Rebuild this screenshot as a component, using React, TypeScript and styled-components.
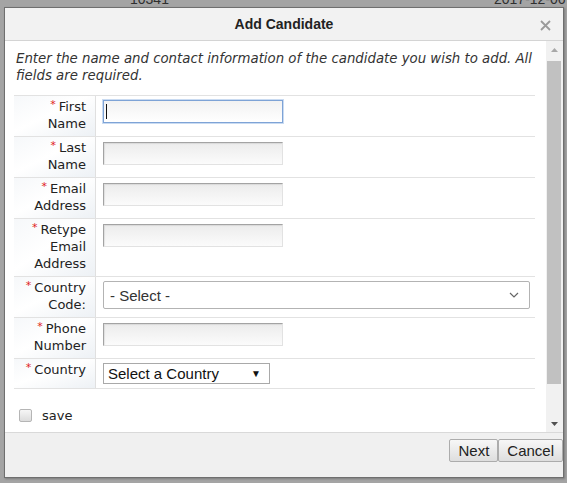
import styled, { createGlobalStyle } from "styled-components";

const GlobalStyle = createGlobalStyle`
  * { box-sizing: border-box; }
  html, body {
    margin: 0;
    padding: 0;
    background: #a4a4a4;
  }
`;

const LABEL_FONT = `"DejaVu Sans", "Liberation Sans", sans-serif`;
const CONTROL_FONT = `"Liberation Sans", Arial, sans-serif`;

const Page = styled.div`
  width: 567px;
  height: 483px;
  overflow: hidden;
  background: #a4a4a4;
`;

const BackStrip = styled.div`
  height: 7px;
  overflow: hidden;
  display: flex;
  font-family: ${CONTROL_FONT};
  font-size: 14px;
  line-height: 16px;
  color: #2f2f2f;
  white-space: nowrap;

  span {
    margin-top: -9px;
  }
`;

const BackId = styled.span`
  margin-left: 130px;
  width: 364px;
`;

const Dialog = styled.div`
  margin-left: 4px;
  width: 560px;
  height: 471px;
  border: 1px solid #6f6f6f;
  background: #fff;
  display: flex;
  flex-direction: column;
  box-shadow: 1px 1px 2px rgba(0, 0, 0, 0.25);
`;

const TitleBar = styled.div`
  height: 33px;
  flex-shrink: 0;
  background: #f2f2f2;
  border-bottom: 1px solid #d4d4d4;
  display: grid;
  grid-template-columns: 1fr auto 1fr;
  align-items: center;
`;

const Title = styled.div`
  grid-column: 2;
  font-family: ${CONTROL_FONT};
  font-size: 14px;
  font-weight: 700;
  color: #222;
`;

const CloseBtn = styled.div`
  grid-column: 3;
  justify-self: end;
  margin-right: 12px;
  margin-top: 2px;
  display: flex;
`;

const Body = styled.div`
  flex: 1;
  display: flex;
  min-height: 0;
`;

const Content = styled.div`
  flex: 1;
  padding: 9px 11px 0 9px;
  overflow: hidden;
`;

const Intro = styled.p`
  margin: 0 0 11px 0;
  padding-left: 2px;
  font-family: ${LABEL_FONT};
  font-style: italic;
  font-size: 13.3px;
  line-height: 17px;
  color: #333;
`;

const Table = styled.div`
  border-top: 1px solid #e2e2e2;
`;

const Row = styled.div`
  display: grid;
  grid-template-columns: 82px 1fr;
  border-bottom: 1px solid #e2e2e2;
`;

const LabelCell = styled.div`
  border-right: 1px solid #e0e0e0;
  background: linear-gradient(to bottom right, #f6f8fa 0%, #ffffff 45%, #edf1f5 100%);
  padding: 2px 9px 4px 4px;
  text-align: right;
  font-family: ${LABEL_FONT};
  font-size: 13px;
  line-height: 17px;
  color: #222;
`;

const Star = styled.span`
  color: #e02020;
  font-size: 11px;
  line-height: 0;
  vertical-align: 3px;
  margin-right: 3px;
`;

const FieldCell = styled.div`
  padding: 4px 0 4px 7px;
`;

const TextField = styled.div<{ $focused?: boolean }>`
  position: relative;
  width: 180px;
  height: 23px;
  border: 1px solid;
  border-color: ${({ $focused }) =>
    $focused ? "#7ea3d6" : "#a3a3a3 #e2e2e2 #e2e2e2 #a3a3a3"};
  box-shadow: ${({ $focused }) =>
    $focused ? "0 0 0 1px #c9dbf2" : "inset 1px 1px 1px rgba(0,0,0,0.08)"};
  background: ${({ $focused }) =>
    $focused ? "linear-gradient(#f2f2f2, #ffffff)" : "linear-gradient(#ececec, #fbfbfb)"};
  margin-top: ${({ $focused }) => ($focused ? "0" : "1px")};
`;

const Caret = styled.span`
  position: absolute;
  left: 2px;
  top: 3px;
  width: 1px;
  height: 15px;
  background: #111;
`;

const CodeSelect = styled.div`
  width: 427px;
  height: 28px;
  border: 1px solid #b3b3b3;
  border-radius: 2px;
  background: #fff;
  display: flex;
  align-items: center;
  justify-content: space-between;
  padding: 0 10px 0 6px;
  font-family: ${CONTROL_FONT};
  font-size: 15px;
  color: #333;
`;

const CountrySelect = styled.div`
  width: 167px;
  height: 21px;
  border: 1px solid #a9a9a9;
  background: #fff;
  display: flex;
  align-items: center;
  justify-content: space-between;
  padding: 0 8px 0 4px;
  font-family: ${CONTROL_FONT};
  font-size: 15px;
  color: #111;
`;

const DownGlyph = styled.span`
  font-size: 10px;
  color: #111;
`;

const SaveRow = styled.label`
  display: flex;
  align-items: center;
  gap: 10px;
  margin-top: 19px;
  padding-left: 5px;
  font-family: ${LABEL_FONT};
  font-size: 13px;
  color: #222;
`;

const CheckBox = styled.span`
  width: 13px;
  height: 13px;
  border: 1px solid #b5b5b5;
  border-radius: 2px;
  background: linear-gradient(#f6f6f6, #dcdcdc);
`;

const ScrollBar = styled.div`
  width: 17px;
  flex-shrink: 0;
  background: #f1f1f1;
  display: flex;
  flex-direction: column;
`;

const ArrowBox = styled.div`
  height: 17px;
  display: flex;
  align-items: center;
  justify-content: center;
`;

const Track = styled.div`
  flex: 1;
  padding: 3px 2px 0 1px;
`;

const Thumb = styled.div`
  height: 323px;
  background: #c1c1c1;
`;

const Footer = styled.div`
  height: 45px;
  flex-shrink: 0;
  background: #f0f0f0;
  border-top: 1px solid #d9d9d9;
  display: flex;
  justify-content: flex-end;
  align-items: flex-start;
  padding: 6px 0 0 0;
`;

const Button = styled.button`
  height: 23px;
  padding: 0 8px;
  border: 1px solid #acacac;
  border-radius: 2px;
  background: linear-gradient(#f7f7f7, #dedede);
  font-family: ${CONTROL_FONT};
  font-size: 15px;
  color: #222;
  cursor: pointer;
`;

interface Field {
  label: string[];
  kind: "text" | "focused" | "code" | "country";
}

const FIELDS: Field[] = [
  { label: ["First", "Name"], kind: "focused" },
  { label: ["Last", "Name"], kind: "text" },
  { label: ["Email", "Address"], kind: "text" },
  { label: ["Retype", "Email", "Address"], kind: "text" },
  { label: ["Country", "Code:"], kind: "code" },
  { label: ["Phone", "Number"], kind: "text" },
  { label: ["Country"], kind: "country" },
];

function renderControl(kind: Field["kind"]) {
  if (kind === "focused")
    return (
      <TextField $focused>
        <Caret />
      </TextField>
    );
  if (kind === "code")
    return (
      <CodeSelect>
        - Select -
        <svg width="10" height="6" viewBox="0 0 10 6">
          <polyline points="1,1 5,5 9,1" fill="none" stroke="#666" strokeWidth="1.2" />
        </svg>
      </CodeSelect>
    );
  if (kind === "country")
    return (
      <CountrySelect>
        Select a Country
        <DownGlyph>▼</DownGlyph>
      </CountrySelect>
    );
  return <TextField />;
}

export default function App() {
  return (
    <Page>
      <GlobalStyle />
      <BackStrip>
        <BackId>10341</BackId>
        <span>2017-12-06</span>
      </BackStrip>

      <Dialog>
        <TitleBar>
          <Title>Add Candidate</Title>
          <CloseBtn>
            <svg width="11" height="11" viewBox="0 0 11 11">
              <path d="M1 1 L10 10 M10 1 L1 10" stroke="#9a9a9a" strokeWidth="1.8" />
            </svg>
          </CloseBtn>
        </TitleBar>

        <Body>
          <Content>
            <Intro>
              Enter the name and contact information of the candidate you wish to add. All
              fields are required.
            </Intro>

            <Table>
              {FIELDS.map((f) => (
                <Row key={f.label.join(" ")}>
                  <LabelCell>
                    <Star>*</Star>
                    {f.label.map((w, i) => (
                      <span key={w + i}>
                        {w}
                        {i < f.label.length - 1 && <br />}
                      </span>
                    ))}
                  </LabelCell>
                  <FieldCell>{renderControl(f.kind)}</FieldCell>
                </Row>
              ))}
            </Table>

            <SaveRow>
              <CheckBox />
              save
            </SaveRow>
          </Content>

          <ScrollBar>
            <ArrowBox>
              <svg width="7" height="4" viewBox="0 0 7 4">
                <polygon points="0,4 3.5,0 7,4" fill="#a8a8a8" />
              </svg>
            </ArrowBox>
            <Track>
              <Thumb />
            </Track>
            <ArrowBox>
              <svg width="7" height="4" viewBox="0 0 7 4">
                <polygon points="0,0 7,0 3.5,4" fill="#505050" />
              </svg>
            </ArrowBox>
          </ScrollBar>
        </Body>

        <Footer>
          <Button>Next</Button>
          <Button>Cancel</Button>
        </Footer>
      </Dialog>
    </Page>
  );
}
